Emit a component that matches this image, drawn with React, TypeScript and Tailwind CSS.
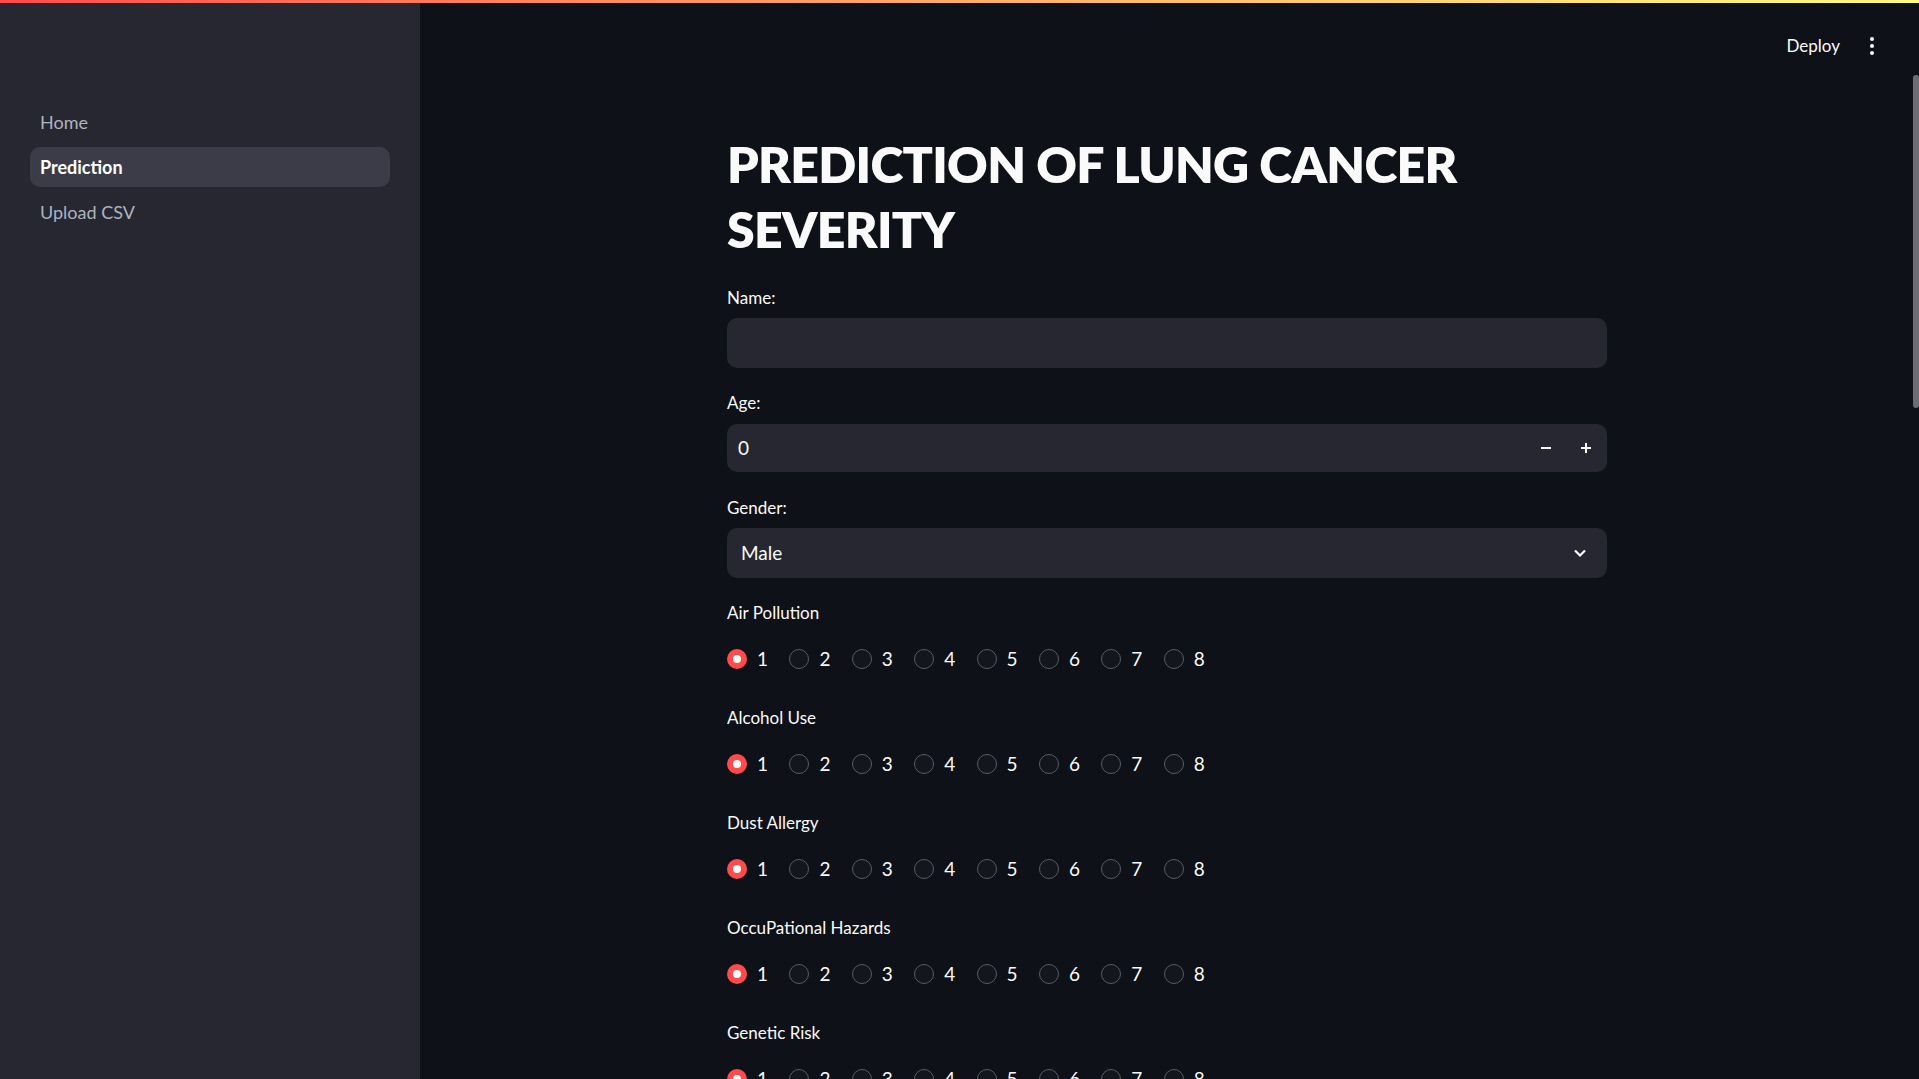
import React from 'react';

const font = { fontFamily: 'Lato, "Noto Sans", sans-serif' };

const navItems = ['Home', 'Prediction', 'Upload CSV'];

const radioGroups = ['Air Pollution', 'Alcohol Use', 'Dust Allergy', 'OccuPational Hazards', 'Genetic Risk'];

function RadioRow() {
  const options = [1, 2, 3, 4, 5, 6, 7, 8];
  return <div className="flex h-6 items-center">
      {options.map(n => <div key={n} className="flex w-[62.4px] items-center">
          {n === 1 ? <span className="flex h-5 w-5 items-center justify-center rounded-full bg-[#ff4b4b]">
              <span className="h-2 w-2 rounded-full bg-white" />
            </span> : <span className="h-5 w-5 rounded-full border border-[#595b63] bg-[#13161d]" />}
          <span className="ml-[10px] text-[19px] text-[#fafafa]">{n}</span>
        </div>)}
    </div>;
}

export default function App() {
  return <div className="relative flex h-screen w-full overflow-hidden bg-[#0e1117] text-[#fafafa]" style={font}>
      <div className="absolute left-0 right-0 top-0 z-10 h-[3px] bg-gradient-to-r from-[#ff4b4b] to-[#fffd80]" />

      <aside className="h-full w-[420px] shrink-0 bg-[#262730] px-[30px] pt-[102px]">
        <nav className="flex flex-col gap-[5px]">
          {navItems.map(item => <div key={item} className={item === 'Prediction' ? 'flex h-10 items-center rounded-[10px] bg-[#3b3c48] px-[10px] text-[18px] font-bold text-white' : 'flex h-10 items-center px-[10px] text-[18px] text-[#aeb3c2]'}>
              {item}
            </div>)}
        </nav>
      </aside>

      <main className="relative h-full flex-1 pr-[5px]">
        <div className="absolute right-[45px] top-[33px] flex items-center">
          <span className="text-[17px] text-[#fafafa]">Deploy</span>
          <div className="ml-[30px] flex flex-col gap-[3px]">
            <span className="h-1 w-1 rounded-full bg-[#fafafa]" />
            <span className="h-1 w-1 rounded-full bg-[#fafafa]" />
            <span className="h-1 w-1 rounded-full bg-[#fafafa]" />
          </div>
        </div>
        <div className="absolute right-0 top-[75px] h-[333px] w-[6px] rounded-sm bg-[#6e6e72]" />

        <div className="mx-auto w-[880px] pt-[132px]">
          <h1 className="text-[50px] font-extrabold leading-[65px] tracking-[-0.7px] text-[#fafafa]">
            PREDICTION OF LUNG CANCER SEVERITY
          </h1>

          <div className="mt-[24px] flex h-6 items-center text-[17px]">Name:</div>
          <div className="mt-[8px] h-[50px] rounded-[10px] bg-[#262730]" />

          <div className="mt-[23px] flex h-6 items-center text-[17px]">Age:</div>
          <div className="mt-[9px] flex h-[48px] items-center rounded-[10px] bg-[#262730]">
            <span className="ml-[11px] flex-1 text-[19px]">0</span>
            <button className="flex h-full w-10 items-center justify-center">
              <svg width="12" height="12" viewBox="0 0 12 12"><rect x="1" y="5" width="10" height="2" fill="#fafafa" /></svg>
            </button>
            <button className="mr-[1px] flex h-full w-10 items-center justify-center">
              <svg width="12" height="12" viewBox="0 0 12 12"><rect x="1" y="5" width="10" height="2" fill="#fafafa" /><rect x="5" y="1" width="2" height="10" fill="#fafafa" /></svg>
            </button>
          </div>

          <div className="mt-[24px] flex h-6 items-center text-[17px]">Gender:</div>
          <div className="mt-[8px] flex h-[50px] items-center justify-between rounded-[10px] bg-[#262730] pl-[14px] pr-[20px]">
            <span className="text-[19px]">Male</span>
            <svg width="14" height="10" viewBox="0 0 14 10" fill="none"><path d="M2 2.5 L7 7.5 L12 2.5" stroke="#fafafa" strokeWidth="2.2" /></svg>
          </div>

          {radioGroups.map((label, i) => <div key={label} className={i === 0 ? 'mt-[23px]' : 'mt-[35px]'}>
              <div className="flex h-6 items-center text-[17px]">{label}</div>
              <div className="mt-[22px]">
                <RadioRow />
              </div>
            </div>)}
        </div>
      </main>
    </div>;
}
